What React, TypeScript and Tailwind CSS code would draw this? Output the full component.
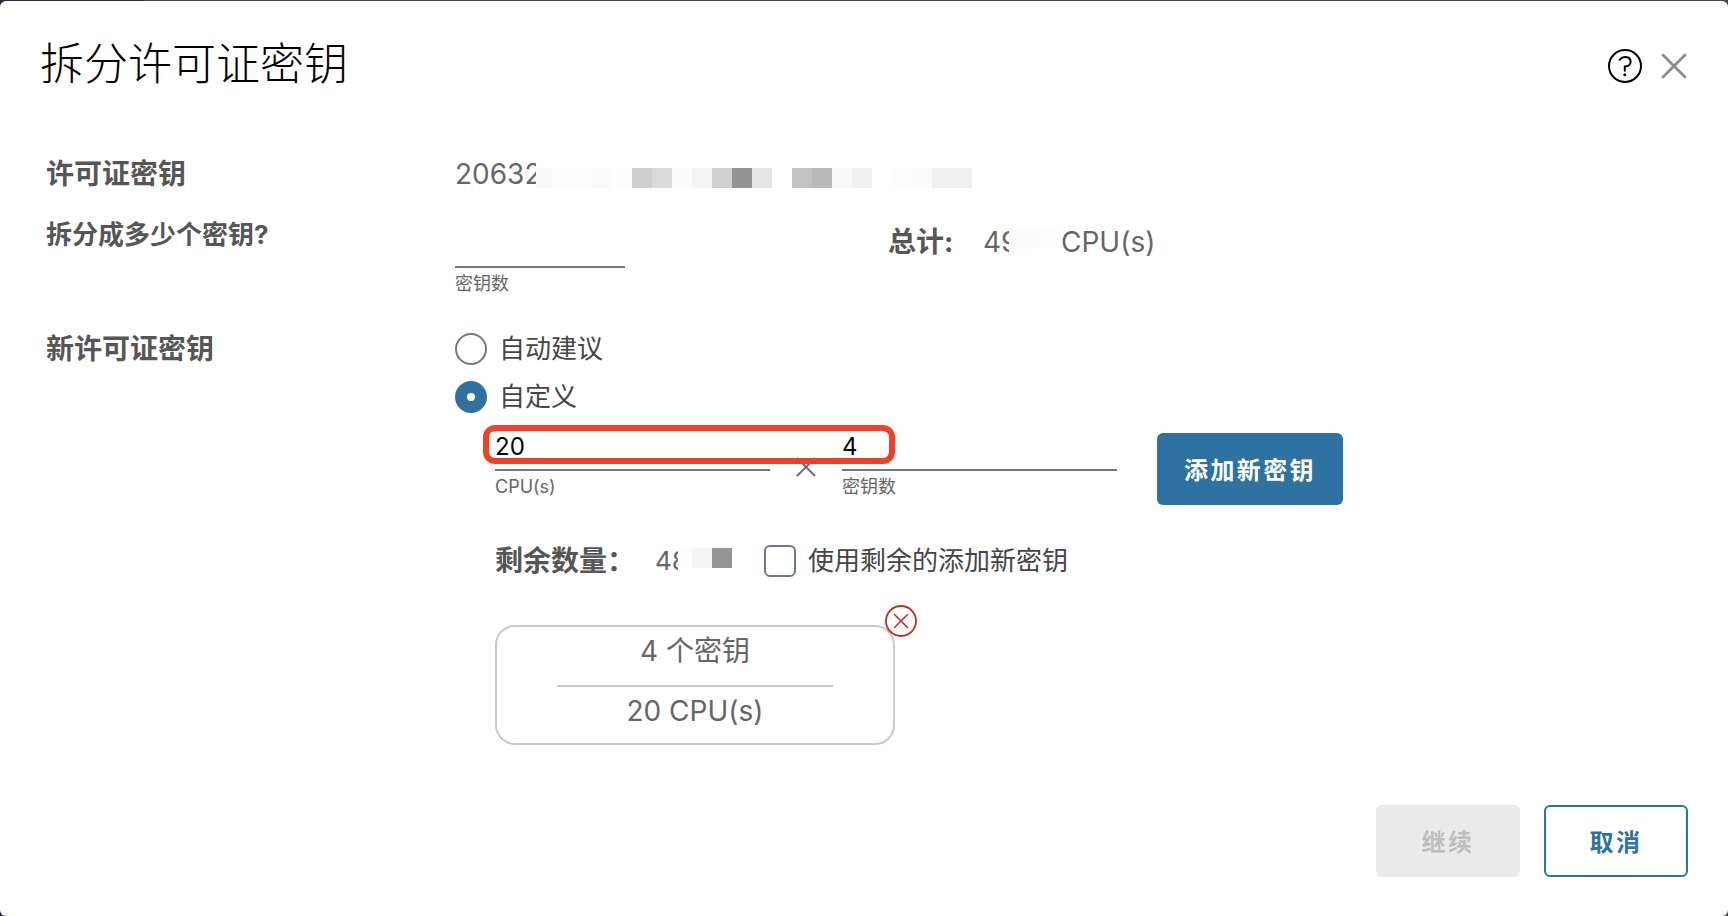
import { useState } from 'react';
import clsx from 'clsx';

interface MaskProps {
  tiles: string[];
  className?: string;
}

// Mosaic strip that hides the sensitive part of a value
function Mask({ tiles, className }: MaskProps) {
  return (
    <span aria-hidden="true" className={clsx('relative flex bg-white py-1', className)}>
      {tiles.map((tile, i) => (
        <span key={i} className={clsx('h-5', tile)} />
      ))}
    </span>
  );
}

const KEY_TILES = [
  'w-4 bg-[#f8f8f8]',
  'w-10 bg-[#fdfdfd]',
  'w-5 bg-[#fafafa]',
  'w-5 bg-[#fdfdfd]',
  'w-5 bg-[#cfcfcf]',
  'w-5 bg-[#dadada]',
  'w-5 bg-[#fcfcfc]',
  'w-5 bg-[#f3f3f3]',
  'w-5 bg-[#d1d1d1]',
  'w-5 bg-[#939393]',
  'w-5 bg-[#e5e5e5]',
  'w-5 bg-white',
  'w-5 bg-[#c2c2c2]',
  'w-5 bg-[#b9b9b9]',
  'w-5 bg-[#f9f9f9]',
  'w-5 bg-[#f0f0f0]',
  'w-5 bg-white',
  'w-5 bg-[#fdfdfd]',
  'w-5 bg-[#fbfbfb]',
  'w-5 bg-[#f0f0f0]',
  'w-5 bg-[#efefef]',
];

const TOTAL_TILES = ['w-1 bg-[#f8f8f8]', 'w-5 bg-[#fcfcfc]', 'w-7 bg-[#fdfdfd]'];

const REMAINING_TILES = ['w-[14px] bg-[#fdfdfd]', 'w-5 bg-[#f4f4f4]', 'w-5 bg-[#959595]'];

interface FieldProps {
  id: string;
  label: string;
  value: string;
  onChange: (value: string) => void;
  className: string;
  inputClassName: string;
}

function Field({ id, label, value, onChange, className, inputClassName }: FieldProps) {
  return (
    <div className={clsx('flex flex-col gap-1', className)}>
      <input
        id={id}
        type="text"
        inputMode="numeric"
        value={value}
        onChange={(e) => onChange(e.target.value)}
        className={clsx(
          'w-full border-b-2 border-[#6d7a81] bg-transparent text-2xl text-black outline-none',
          inputClassName
        )}
      />
      <label htmlFor={id} className="text-lg leading-6 text-[#666]">
        {label}
      </label>
    </div>
  );
}

interface RadioProps {
  label: string;
  checked: boolean;
  onChange: () => void;
}

function Radio({ label, checked, onChange }: RadioProps) {
  return (
    <label className="flex h-8 items-center gap-3 text-[26px] leading-8 text-[#454545]">
      <input
        type="radio"
        name="mode"
        checked={checked}
        onChange={onChange}
        className="size-8 shrink-0 appearance-none rounded-full border-2 border-[#6d7a81] checked:border-[12px] checked:border-[#2e72a1]"
      />
      {label}
    </label>
  );
}

export default function App() {
  const [count, setCount] = useState('');
  const [mode, setMode] = useState('custom');
  const [cpus, setCpus] = useState('20');
  const [keys, setKeys] = useState('4');
  const [useRemaining, setUseRemaining] = useState(false);

  return (
    <div className="flex min-h-screen flex-col bg-[linear-gradient(90deg,#262d3a_144px,#474546_144px)] pt-px font-['Inter','Noto_Sans_CJK_SC',sans-serif]">
      <main className="flex flex-1 flex-col rounded-md bg-white px-10 pt-[35px] pb-[39px] text-[28px] leading-9 text-[#666]">
        <header className="flex items-center justify-between">
          <h1 className="text-[44px] leading-[56px] font-light text-black">拆分许可证密钥</h1>
          <div className="flex items-center gap-[18px] pt-1">
            <button type="button" aria-label="帮助">
              <svg viewBox="0 0 34 34" className="size-[34px]" fill="none" stroke="#000" strokeWidth="2">
                <circle cx="17" cy="17" r="16" />
                <path
                  d="M11.6 10.8c1.5-1.8 3.3-2.7 5.4-2.7 3.3 0 5.6 1.8 5.6 4.6 0 3.1-2.5 4.5-5.8 4.9v4.1"
                  strokeLinecap="round"
                />
                <circle cx="16.8" cy="25.8" r="1.5" fill="#000" stroke="none" />
              </svg>
            </button>
            <button type="button" aria-label="关闭">
              <svg
                viewBox="0 0 28 28"
                className="size-7"
                fill="none"
                stroke="#8c8c8c"
                strokeWidth="2.8"
                strokeLinecap="round"
              >
                <path d="M3 3l22 22M25 3L3 25" />
              </svg>
            </button>
          </div>
        </header>

        <div className="mt-16 flex flex-col pl-1.5">
          <div className="flex">
            <h2 className="w-[409px] shrink-0 font-bold text-[#565656]">许可证密钥</h2>
            <div className="flex h-9 items-center">
              <span className="w-[81px]">20632</span>
              <Mask tiles={KEY_TILES} className="mt-2" />
            </div>
          </div>

          <div className="mt-[25px] flex">
            <label htmlFor="count" className="w-[409px] shrink-0 text-[26px] font-bold text-[#565656]">
              拆分成多少个密钥?
            </label>
            <div className="w-[433px] shrink-0 pt-[15px]">
              <Field
                id="count"
                label="密钥数"
                value={count}
                onChange={setCount}
                className="w-[170px]"
                inputClassName="h-9"
              />
            </div>
            <div className="flex h-9 items-center pt-3.5">
              <span className="w-[95px] font-bold text-[#565656]">总计:</span>
              <span className="w-[26px]">49</span>
              <Mask tiles={TOTAL_TILES} className="-mt-1.5" />
              <span>CPU(s)</span>
            </div>
          </div>

          <div className="mt-[35px] flex">
            <h2 className="w-[409px] shrink-0 font-bold text-[#565656]">新许可证密钥</h2>
            <div className="flex flex-col pt-0.5">
              <div className="flex flex-col gap-4">
                <Radio label="自动建议" checked={mode === 'auto'} onChange={() => setMode('auto')} />
                <Radio label="自定义" checked={mode === 'custom'} onChange={() => setMode('custom')} />
              </div>

              <div className="flex flex-col pl-10">
                <div className="relative mt-2.5 flex items-start">
                  <Field
                    id="cpus"
                    label="CPU(s)"
                    value={cpus}
                    onChange={setCpus}
                    className="w-[275px]"
                    inputClassName="h-12"
                  />
                  <div className="flex w-[72px] justify-center pt-[34px]">
                    <svg viewBox="0 0 20 20" className="size-5" fill="none" stroke="#6a6a6a" strokeWidth="1.8">
                      <path d="M1 1l18 18M19 1L1 19" />
                    </svg>
                  </div>
                  <Field
                    id="keys"
                    label="密钥数"
                    value={keys}
                    onChange={setKeys}
                    className="w-[275px]"
                    inputClassName="h-12"
                  />
                  <button
                    type="button"
                    className="mt-2.5 ml-10 h-[72px] w-[186px] rounded-md bg-[#2e72a1] pt-1 text-2xl font-bold tracking-widest text-white"
                  >
                    添加新密钥
                  </button>
                  {/* Highlight around the entered values */}
                  <div className="pointer-events-none absolute top-0.5 -left-3 h-[39px] w-[412px] rounded-xl border-[6px] border-[#ee4128]" />
                </div>

                <div className="mt-10 flex h-8 items-center">
                  <span className="w-40 font-bold text-[#565656]">剩余数量：</span>
                  <span className="w-[23px] text-[26px]">48</span>
                  <Mask tiles={REMAINING_TILES} className="-mt-1.5" />
                  <label className="ml-8 flex items-center gap-3 text-[26px] text-[#454545]">
                    <input
                      type="checkbox"
                      checked={useRemaining}
                      onChange={(e) => setUseRemaining(e.target.checked)}
                      className="size-8 appearance-none rounded-md border-2 border-[#6d7a81] checked:bg-[#2e72a1]"
                    />
                    使用剩余的添加新密钥
                  </label>
                </div>

                <div className="relative mt-12 flex h-[120px] w-[400px] flex-col items-center rounded-[20px] border-2 border-[#c9c9c9] pt-1.5">
                  <p>4 个密钥</p>
                  <hr className="mt-4 mb-1.5 w-[276px] border-t-2 border-[#c9c9c9]" />
                  <p>20 CPU(s)</p>
                  <button type="button" aria-label="删除" className="absolute -top-[22px] -right-6 size-8">
                    <svg viewBox="0 0 32 32" className="size-8" fill="none" stroke="#c02c14" strokeWidth="1.8">
                      <circle cx="16" cy="16" r="15" />
                      <path d="M9.5 9.5l13 13M22.5 9.5l-13 13" strokeWidth="1.5" strokeLinecap="round" />
                    </svg>
                  </button>
                </div>
              </div>
            </div>
          </div>
        </div>

        <footer className="mt-auto flex justify-end gap-6 text-2xl font-bold tracking-widest">
          <button type="button" disabled className="h-[72px] w-36 rounded-md bg-[#eaeaea] pt-1 text-[#bdbdbd]">
            继续
          </button>
          <button type="button" className="h-[72px] w-36 rounded-md border-2 border-[#2e72a1] pt-1 text-[#2e72a1]">
            取消
          </button>
        </footer>
      </main>
    </div>
  );
}
